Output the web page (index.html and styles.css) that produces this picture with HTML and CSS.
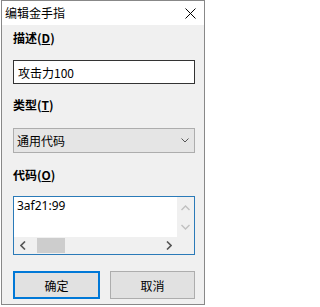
FILE: index.html
```html
<!DOCTYPE html>
<html>
<head>
<meta charset="utf-8">
<link rel="stylesheet" href="styles.css">
</head>
<body>
<div class="window">
  <div class="titlebar">
    <span class="title">编辑金手指</span>
    <svg class="close" width="11" height="11" viewBox="0 0 11 11"><path d="M0.5 0.5 L10.5 10.5 M10.5 0.5 L0.5 10.5" stroke="#000" stroke-width="1" fill="none"/></svg>
  </div>
  <div class="content">
    <div class="label l1">描述(<u>D</u>)</div>
    <div class="input">攻击力100</div>
    <div class="label l2">类型(<u>T</u>)</div>
    <div class="select">
      <span>通用代码</span>
      <svg width="8" height="5" viewBox="0 0 8 5"><polyline points="0.5,0.5 4,4 7.5,0.5" stroke="#555" stroke-width="1" fill="none"/></svg>
    </div>
    <div class="label l3">代码(<u>O</u>)</div>
    <div class="textarea">
      <div class="text">3af21:99</div>
      <div class="vscroll">
        <svg width="9" height="6" viewBox="0 0 9 6"><polyline points="0.5,5 4.5,1 8.5,5" stroke="#c0c0c0" stroke-width="1.4" fill="none"/></svg>
        <svg width="9" height="6" viewBox="0 0 9 6"><polyline points="0.5,1 4.5,5 8.5,1" stroke="#c0c0c0" stroke-width="1.4" fill="none"/></svg>
      </div>
      <div class="hscroll">
        <svg class="arr" width="6" height="9" viewBox="0 0 6 9"><polyline points="5,0.5 1,4.5 5,8.5" stroke="#555" stroke-width="1.6" fill="none"/></svg>
        <div class="track"><div class="thumb"></div></div>
        <svg class="arr" width="6" height="9" viewBox="0 0 6 9"><polyline points="1,0.5 5,4.5 1,8.5" stroke="#555" stroke-width="1.6" fill="none"/></svg>
      </div>
      <div class="corner"></div>
    </div>
    <div class="buttons">
      <div class="btn primary">确定</div>
      <div class="btn">取消</div>
    </div>
  </div>
</div>
</body>
</html>
```
FILE: styles.css
```css
html, body {
  margin: 0;
  padding: 0;
  background: #ffffff;
}
body {
  font-family: "Noto Sans CJK SC", "Noto Sans", sans-serif;
  font-size: 12px;
  color: #000;
}
.window {
  margin-left: 1px;
  width: 204px;
  height: 305px;
  box-sizing: border-box;
  border: 1px solid #888888;
  background: #f0f0f0;
  display: flex;
  flex-direction: column;
}
.titlebar {
  height: 24px;
  background: #ffffff;
  display: flex;
  align-items: center;
  justify-content: space-between;
  padding: 0 8px 0 3px;
  flex: none;
}
.title {
  font-size: 12px;
  line-height: 14px;
  color: #000;
}
.close {
  display: block;
}
.content {
  padding: 0 9px 0 11px;
  display: flex;
  flex-direction: column;
}
.label {
  font-weight: bold;
  font-size: 12px;
  line-height: 14px;
  height: 14px;
}
.label u {
  text-decoration-thickness: 1px;
  text-underline-offset: 1px;
}
.l1 { margin-top: 6px; }
.input {
  margin-top: 15px;
  height: 24px;
  box-sizing: border-box;
  border: 1px solid #333333;
  background: #ffffff;
  padding: 0 0 0 4px;
  display: flex;
  align-items: center;
  font-size: 12px;
}
.l2 { margin-top: 14px; }
.select {
  margin-top: 16px;
  height: 25px;
  box-sizing: border-box;
  border: 1px solid #adadad;
  background: #e5e5e5;
  display: flex;
  align-items: center;
  justify-content: space-between;
  padding: 0 5px 0 3px;
  font-size: 12px;
}
.select svg { display: block; }
.l3 { margin-top: 15px; }
.textarea {
  margin-top: 14px;
  height: 59px;
  box-sizing: border-box;
  border: 1px solid #2a7ab8;
  background: #ffffff;
  display: grid;
  grid-template-columns: 1fr 17px;
  grid-template-rows: 1fr 17px;
}
.text {
  padding: 2px 0 0 3px;
  font-size: 12px;
  line-height: 14px;
  font-family: "Noto Sans", "Noto Sans CJK SC", sans-serif;
}
.vscroll {
  background: #f0f0f0;
  display: flex;
  flex-direction: column;
  align-items: center;
  justify-content: space-between;
  padding: 8px 0 7px;
}
.vscroll svg { display: block; }
.hscroll {
  background: #f0f0f0;
  display: flex;
  align-items: center;
  padding: 0 5px 0 6px;
  gap: 11px;
}
.hscroll .arr { display: block; flex: none; }
.track {
  flex: 1;
  height: 15px;
  display: flex;
  align-items: center;
}
.thumb {
  width: 28px;
  height: 15px;
  background: #cdcdcd;
}
.corner {
  background: #f0f0f0;
}
.buttons {
  margin-top: 16px;
  display: flex;
  gap: 10px;
}
.btn {
  flex: 1;
  height: 28px;
  box-sizing: border-box;
  border: 1px solid #adadad;
  background: #e1e1e1;
  display: flex;
  align-items: center;
  justify-content: center;
  font-size: 12px;
}
.btn.primary {
  border: 2px solid #0078d7;
}
```
